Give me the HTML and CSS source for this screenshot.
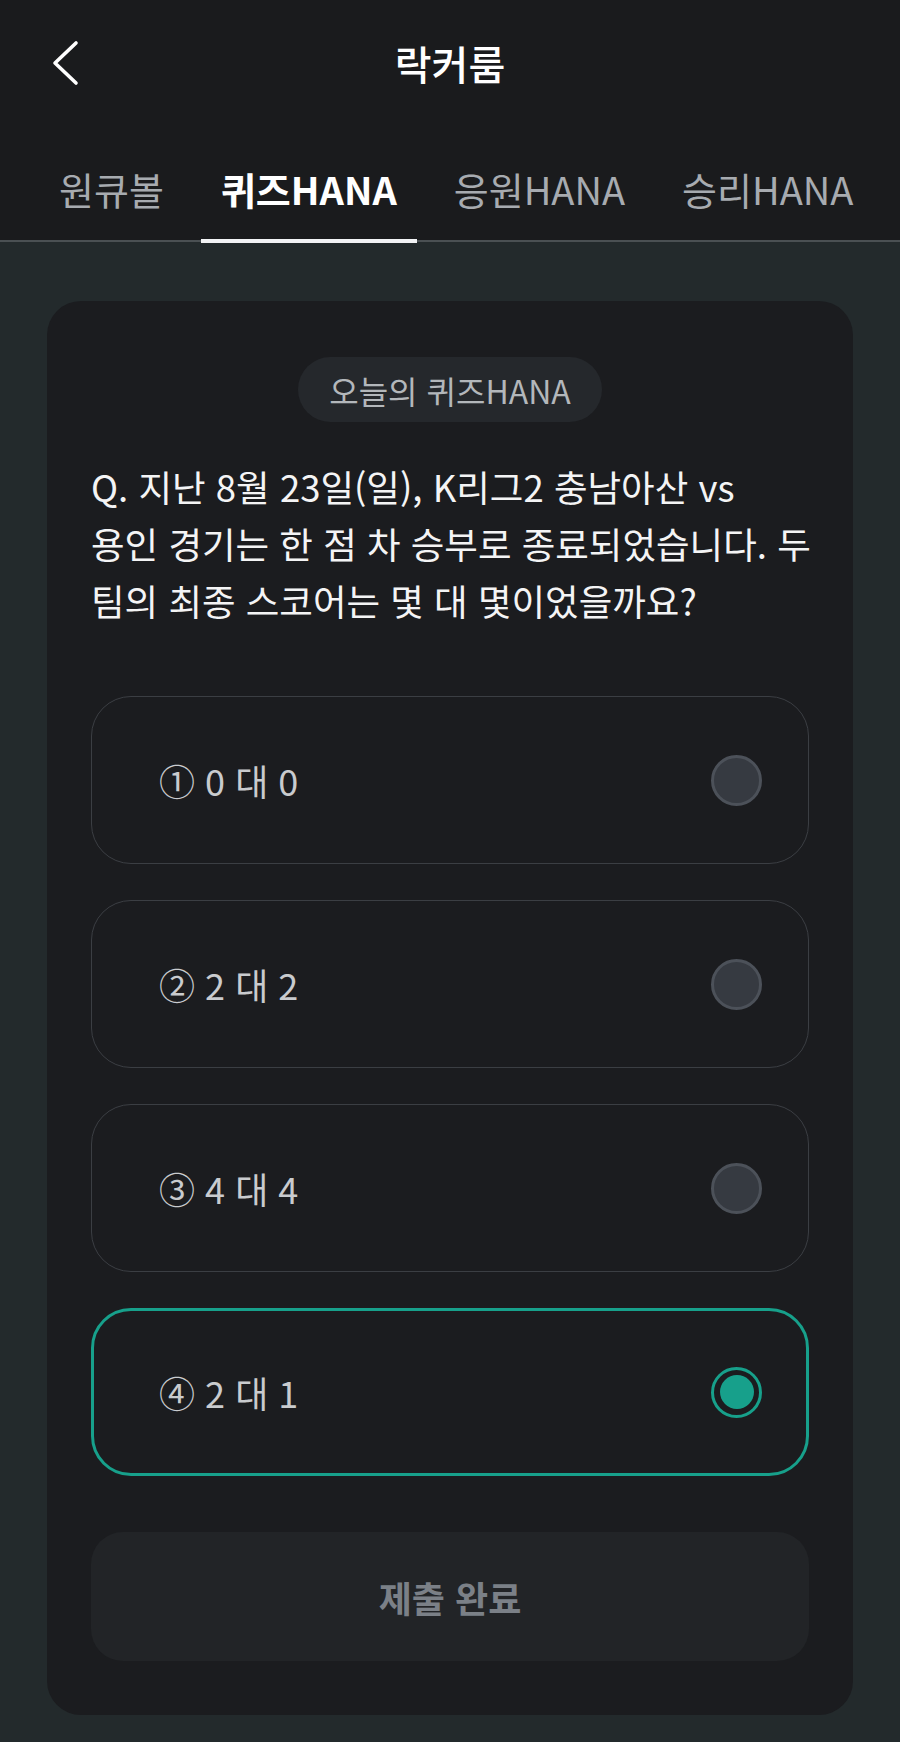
FILE: index.html
```html
<!DOCTYPE html>
<html lang="ko">
<head>
	<meta charset="UTF-8">
	<title>락커룸</title>
	<link rel="stylesheet" href="styles.css">
</head>
<body>
	<div id="header">
		<div id="topbar">
			<div id="back">
				<svg width="34" height="48" viewBox="0 0 34 48"><polyline points="24,4 3,24 24,44" fill="none" stroke="#fff" stroke-width="3.6" stroke-linecap="round" stroke-linejoin="round"/></svg>
			</div>
			<div id="title">락커룸</div>
			<div></div>
		</div>
		<div id="tabs">
			<div class="tab">원큐볼</div>
			<div class="tab active">퀴즈HANA</div>
			<div class="tab">응원HANA</div>
			<div class="tab">승리HANA</div>
		</div>
	</div>
	<div id="content">
		<div id="card">
			<div id="badgewrap"><div id="badge">오늘의 퀴즈HANA</div></div>
			<div id="question">Q. 지난 8월 23일(일), K리그2 충남아산 vs<br>용인 경기는 한 점 차 승부로 종료되었습니다. 두 팀의 최종 스코어는 몇 대 몇이었을까요?</div>
			<div id="options">
				<div class="option"><div class="optiontxt">① 0 대 0</div><div class="radio"></div></div>
				<div class="option"><div class="optiontxt">② 2 대 2</div><div class="radio"></div></div>
				<div class="option"><div class="optiontxt">③ 4 대 4</div><div class="radio"></div></div>
				<div class="option selected"><div class="optiontxt">④ 2 대 1</div><div class="radio"><div class="dot"></div></div></div>
			</div>
			<div id="submit">제출 완료</div>
		</div>
	</div>
</body>
</html>
```
FILE: styles.css
```css
*{
	margin: 0;
	padding: 0;
	box-sizing: border-box;
	font-family: "Noto Sans CJK KR", "Noto Sans", sans-serif;
}
body{
	width: 900px;
	height: 1742px;
	background-color: #232a2c;
	overflow: hidden;
}
#header{
	background-color: #1a1b1d;
	border-bottom: 2px solid #4a5053;
}
#topbar{
	height: 126px;
	display: grid;
	grid-template-columns: 1fr auto 1fr;
	align-items: center;
}
#back{
	padding-left: 52px;
	display: flex;
	align-items: center;
}
#title{
	color: white;
	font-size: 40px;
	font-weight: 500;
	line-height: 46px;
}
#tabs{
	height: 114px;
	display: flex;
	gap: 17px;
	padding-left: 39px;
}
.tab{
	position: relative;
	padding: 42px 20px 0 20px;
	line-height: 42px;
	font-size: 38px;
	color: #a7abb0;
}
.tab.active{
	color: white;
	font-weight: bold;
}
.tab.active::after{
	content: "";
	position: absolute;
	left: 0;
	right: 0;
	bottom: -3px;
	height: 4px;
	background-color: #f2f3f5;
}
#content{
	padding: 59px 47px 27px 47px;
}
#card{
	background-color: #1b1c1f;
	border-radius: 34px;
	padding: 56px 44px 54px 44px;
}
#badgewrap{
	display: flex;
	justify-content: center;
}
#badge{
	height: 65px;
	width: 304px;
	border-radius: 33px;
	background-color: #25282c;
	color: #b3b7bb;
	font-size: 32px;
	display: flex;
	align-items: center;
	justify-content: center;
}
#question{
	margin-top: 36px;
	margin-right: -8px;
	color: #f4f4f5;
	font-size: 36.5px;
	line-height: 57px;
	word-break: keep-all;
}
#options{
	margin-top: 67px;
	display: flex;
	flex-direction: column;
	gap: 36px;
}
.option{
	height: 168px;
	border: 1.5px solid #3b3e43;
	border-radius: 40px;
	display: flex;
	align-items: center;
	justify-content: space-between;
	padding: 0 46px 0 67px;
}
.option.selected{
	border: 3px solid #17a08b;
	padding: 0 44px 0 65px;
}
.optiontxt{
	color: #c9cbce;
	font-size: 36px;
}
.radio{
	width: 51px;
	height: 51px;
	border-radius: 50%;
	background-color: #363a41;
	border: 3px solid #4c5159;
	display: flex;
	align-items: center;
	justify-content: center;
}
.selected .radio{
	background-color: transparent;
	border: 3px solid #17a08b;
}
.dot{
	width: 34px;
	height: 34px;
	border-radius: 50%;
	background-color: #17a08b;
}
#submit{
	margin-top: 56px;
	height: 129px;
	border-radius: 32px;
	background-color: #222427;
	color: #7b8087;
	font-size: 36px;
	font-weight: bold;
	display: flex;
	align-items: center;
	justify-content: center;
}
```
